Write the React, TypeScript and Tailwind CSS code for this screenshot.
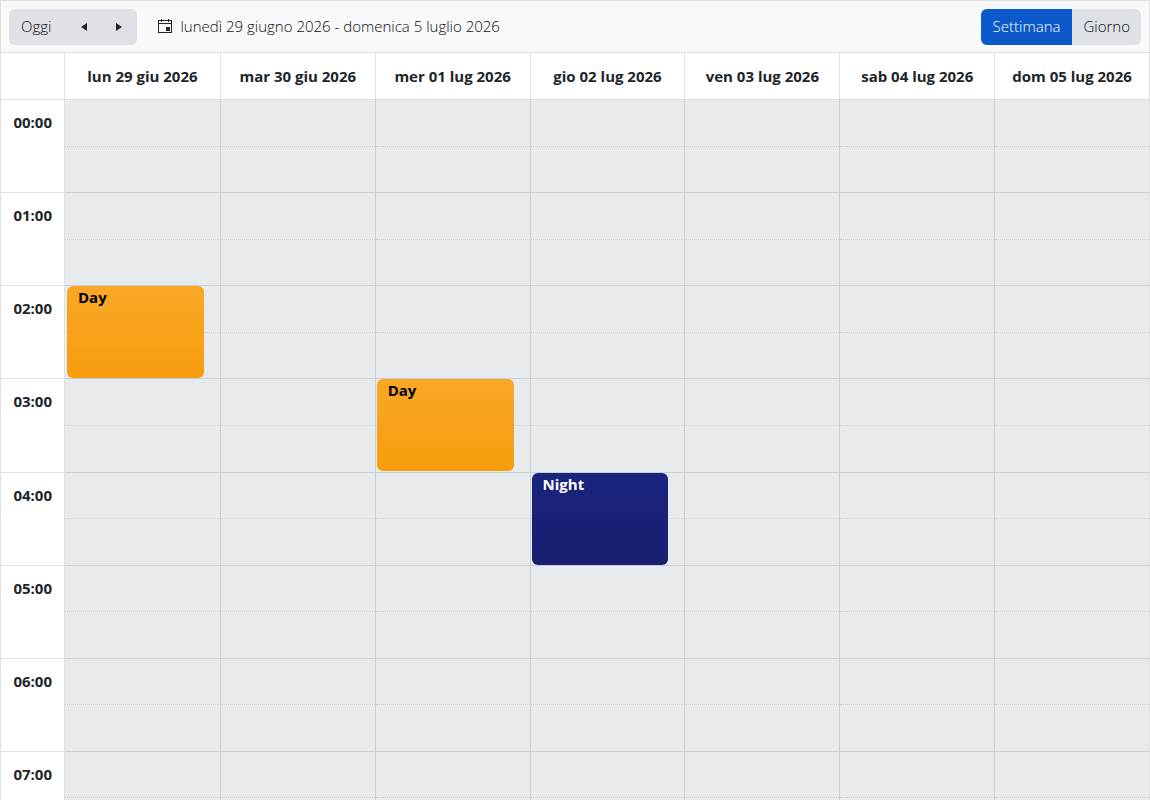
const days = [
  "lun 29 giu 2026",
  "mar 30 giu 2026",
  "mer 01 lug 2026",
  "gio 02 lug 2026",
  "ven 03 lug 2026",
  "sab 04 lug 2026",
  "dom 05 lug 2026",
];

const hours = ["00:00", "01:00", "02:00", "03:00", "04:00", "05:00", "06:00", "07:00"];

type Shift = { day: number; hour: number; title: string; style: string };

const dayStyle = "bg-linear-to-b from-[#f9a825] to-[#f89c0a] text-black";
const nightStyle = "bg-linear-to-b from-[#1a237e] to-[#181f70] text-white";

const shifts: Shift[] = [
  { day: 0, hour: 2, title: "Day", style: dayStyle },
  { day: 2, hour: 3, title: "Day", style: dayStyle },
  { day: 3, hour: 4, title: "Night", style: nightStyle },
];

function Slot({ day, hour }: { day: number; hour: number }) {
  const shift = shifts.find((s) => s.day === day && s.hour === hour);
  const edge = day > 0 ? "border-l" : "";
  return (
    <td className="relative grid grid-rows-2 bg-[#e8ebee] p-0">
      <div className={`border-[#cbcfd2] ${edge}`}>
        <div className="h-full border-b border-dotted border-[#c8ccd0]" />
      </div>
      <div className={`border-b border-[#cbcfd2] ${edge}`} />
      {shift && (
        <div
          className={`absolute top-0 right-4 left-0.5 h-[92px] rounded-md px-[11px] py-px leading-5 font-bold ${shift.style}`}
        >
          {shift.title}
        </div>
      )}
    </td>
  );
}

export default function App() {
  return (
    <div className="flex h-screen flex-col overflow-hidden border border-b-0 border-[#dfe0e2] bg-white font-['Open_Sans',sans-serif] text-[15px] text-[#212529]">
      <header className="flex h-[52px] shrink-0 items-start justify-between border-b border-[#dcdee1] bg-[#f8f9fb] px-2 pt-2 font-light text-[#0b0d0f]">
        <div className="flex items-center">
          <div className="flex h-9 overflow-hidden rounded-md bg-[#dee1e6]">
            <button type="button" className="pr-4 pb-0.5 pl-3">
              Oggi
            </button>
            <button type="button" aria-label="Precedente" className="-ml-px flex w-9 items-center justify-center">
              <svg className="h-4 w-4" viewBox="0 0 16 16" fill="#212529">
                <path d="M11 4v8L5 8z" />
              </svg>
            </button>
            <button type="button" aria-label="Successivo" className="-ml-px flex w-9 items-center justify-center">
              <svg className="h-4 w-4" viewBox="0 0 16 16" fill="#212529">
                <path d="M5 4v8l6-4z" />
              </svg>
            </button>
          </div>
          <button type="button" className="flex h-9 items-center gap-[7px] pb-0.5 pl-5">
            <svg className="h-4 w-4" viewBox="0 0 16 16" fill="#212529">
              <path d="M12 2V1h-1v1H5V1H4v1H1v13h14V2h-3zm2 12H2V6h12v8zm0-9H2V3h2v1h1V3h6v1h1V3h2v2z" />
              <path d="M9 9h4v4H9z" />
            </svg>
            <span>lunedì 29 giugno 2026 - domenica 5 luglio 2026</span>
          </button>
        </div>
        <div className="flex h-9 overflow-hidden rounded-md bg-[#dee1e6]">
          <button type="button" aria-pressed="true" className="bg-[#0b58cb] px-3 pb-0.5 text-white">
            Settimana
          </button>
          <button type="button" aria-pressed="false" className="px-[11px] pb-0.5">
            Giorno
          </button>
        </div>
      </header>
      <table className="flex min-h-0 flex-1 flex-col">
        <thead className="block shrink-0">
          <tr className="grid h-[47px] grid-cols-[64px_repeat(7,minmax(0,1fr))] border-b border-[#dfe0e2]">
            <td className="border-r border-[#dfe0e2]" />
            {days.map((d, i) => (
              <th
                key={d}
                scope="col"
                className={`flex items-center justify-center border-[#dfe0e2] font-bold ${i > 0 ? "border-l" : ""}`}
              >
                {d}
              </th>
            ))}
          </tr>
        </thead>
        <tbody className="grid h-[745px] shrink-0 auto-rows-fr">
          {hours.map((label, h) => (
            <tr key={label} className="grid grid-cols-[64px_repeat(7,minmax(0,1fr))]">
              <th
                scope="row"
                className="border-r border-b border-[#dfe0e2] pt-3 pr-3 text-right leading-[21px] font-bold"
              >
                {label}
              </th>
              {days.map((d, i) => (
                <Slot key={d} day={i} hour={h} />
              ))}
            </tr>
          ))}
        </tbody>
      </table>
    </div>
  );
}
